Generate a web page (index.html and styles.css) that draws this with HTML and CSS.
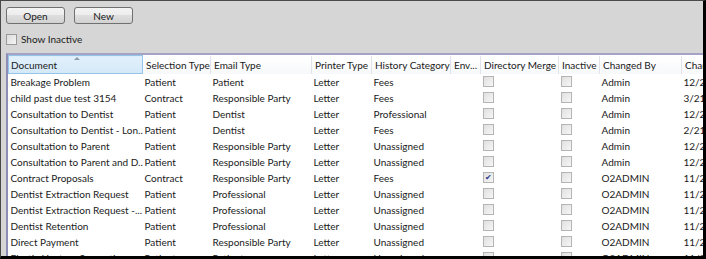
FILE: index.html
```html
<!DOCTYPE html>
<html lang="en">

<head>
    <meta charset="UTF-8" />
    <title>Documents</title>
    <link rel="stylesheet" href="styles.css">
</head>

<body>
    <div class="window">
        <div class="toolbar">
            <button class="btn">Open</button>
            <button class="btn">New</button>
        </div>

        <label class="show-inactive"><span class="box"></span>Show Inactive</label>

        <div class="grid">
            <table>
                <colgroup>
                    <col class="c-doc">
                    <col class="c-sel">
                    <col class="c-email">
                    <col class="c-print">
                    <col class="c-hist">
                    <col class="c-env">
                    <col class="c-dir">
                    <col class="c-inact">
                    <col class="c-by">
                    <col class="c-date">
                </colgroup>
                <thead>
                    <tr>
                        <th class="sorted"><span class="sort-arrow"></span>Document</th>
                        <th>Selection Type</th>
                        <th>Email Type</th>
                        <th>Printer Type</th>
                        <th>History Category</th>
                        <th>Env...</th>
                        <th>Directory Merge</th>
                        <th>Inactive</th>
                        <th>Changed By</th>
                        <th>Changed Date</th>
                    </tr>
                </thead>
                <tbody>
                    <tr><td>Breakage Problem</td><td>Patient</td><td>Patient</td><td>Letter</td><td>Fees</td><td></td><td><span class="cb"></span></td><td><span class="cb"></span></td><td>Admin</td><td>12/28/2011</td></tr>
                    <tr><td>child past due test 3154</td><td>Contract</td><td>Responsible Party</td><td>Letter</td><td>Fees</td><td></td><td><span class="cb"></span></td><td><span class="cb"></span></td><td>Admin</td><td>3/21/2012</td></tr>
                    <tr><td>Consultation to Dentist</td><td>Patient</td><td>Dentist</td><td>Letter</td><td>Professional</td><td></td><td><span class="cb"></span></td><td><span class="cb"></span></td><td>Admin</td><td>12/28/2011</td></tr>
                    <tr><td>Consultation to Dentist - Lon...</td><td>Patient</td><td>Dentist</td><td>Letter</td><td>Fees</td><td></td><td><span class="cb"></span></td><td><span class="cb"></span></td><td>Admin</td><td>2/21/2012</td></tr>
                    <tr><td>Consultation to Parent</td><td>Patient</td><td>Responsible Party</td><td>Letter</td><td>Unassigned</td><td></td><td><span class="cb"></span></td><td><span class="cb"></span></td><td>Admin</td><td>12/28/2011</td></tr>
                    <tr><td>Consultation to Parent and D...</td><td>Patient</td><td>Responsible Party</td><td>Letter</td><td>Unassigned</td><td></td><td><span class="cb"></span></td><td><span class="cb"></span></td><td>Admin</td><td>12/28/2011</td></tr>
                    <tr><td>Contract Proposals</td><td>Contract</td><td>Responsible Party</td><td>Letter</td><td>Fees</td><td></td><td><span class="cb checked">&#10004;</span></td><td><span class="cb"></span></td><td>O2ADMIN</td><td>11/28/2011</td></tr>
                    <tr><td>Dentist Extraction Request</td><td>Patient</td><td>Professional</td><td>Letter</td><td>Unassigned</td><td></td><td><span class="cb"></span></td><td><span class="cb"></span></td><td>O2ADMIN</td><td>11/28/2011</td></tr>
                    <tr><td>Dentist Extraction Request -...</td><td>Patient</td><td>Professional</td><td>Letter</td><td>Unassigned</td><td></td><td><span class="cb"></span></td><td><span class="cb"></span></td><td>O2ADMIN</td><td>11/28/2011</td></tr>
                    <tr><td>Dentist Retention</td><td>Patient</td><td>Professional</td><td>Letter</td><td>Unassigned</td><td></td><td><span class="cb"></span></td><td><span class="cb"></span></td><td>O2ADMIN</td><td>11/28/2011</td></tr>
                    <tr><td>Direct Payment</td><td>Patient</td><td>Responsible Party</td><td>Letter</td><td>Unassigned</td><td></td><td><span class="cb"></span></td><td><span class="cb"></span></td><td>O2ADMIN</td><td>11/28/2011</td></tr>
                    <tr><td>Elastic Ligature Separation</td><td>Patient</td><td>Patient</td><td>Letter</td><td>Unassigned</td><td></td><td><span class="cb"></span></td><td><span class="cb"></span></td><td>O2ADMIN</td><td>11/28/2011</td></tr>
                </tbody>
            </table>
        </div>
    </div>
</body>

</html>
```

FILE: styles.css
```css
body {
    margin: 0;
    font-family: Lato, 'Open Sans', sans-serif;
    font-size: 10px;
    color: #1a1a1a;
}

.window {
    width: 706px;
    height: 259px;
    box-sizing: border-box;
    border-top: 1px solid #4a4a4a;
    border-left: 1px solid #4a4a4a;
    border-right: 3px solid #000;
    border-bottom: 3px solid #000;
    background: #d6d6d6;
    overflow: hidden;
}

/* TOOLBAR */
.toolbar {
    display: flex;
    gap: 9px;
    padding: 6px 0 0 5px;
}

.btn {
    width: 59px;
    height: 17px;
    box-sizing: border-box;
    padding: 0;
    border: 1px solid #707070;
    border-radius: 3px;
    background: linear-gradient(#f4f4f4, #ececec 50%, #dedede 50%, #d2d2d2);
    font-family: inherit;
    font-size: 10px;
    line-height: 14px;
    color: #1a1a1a;
}

.show-inactive {
    display: flex;
    align-items: center;
    gap: 4px;
    margin: 9px 0 0 5px;
    height: 12px;
    line-height: 12px;
}

.box {
    width: 9px;
    height: 9px;
    border: 1px solid #9a9a9a;
    background: linear-gradient(135deg, #dcdcdc, #f4f4f4);
}

/* GRID */
.grid {
    margin: 8px 0 0 5px;
    width: 760px;
    height: 220px;
    background: #fff;
    border-top: 2px solid #a3a3c6;
    border-left: 2px solid #8d8db8;
    overflow: hidden;
}

table {
    border-collapse: collapse;
    table-layout: fixed;
    width: 758px;
}

.c-doc { width: 134px; }
.c-sel { width: 68px; }
.c-email { width: 101px; }
.c-print { width: 60px; }
.c-hist { width: 79px; }
.c-env { width: 30px; }
.c-dir { width: 78px; }
.c-inact { width: 41px; }
.c-by { width: 82px; }
.c-date { width: 85px; }

th {
    position: relative;
    height: 17px;
    padding: 0 0 0 3px;
    font-weight: normal;
    text-align: left;
    white-space: nowrap;
    overflow: hidden;
    background: linear-gradient(#ffffff, #f7f8fa);
    border-right: 1px solid #e2e3ea;
}

th.sorted {
    padding-left: 2px;
    background: linear-gradient(#e3f1fb, #d3e8f8);
    border: 1px solid #96c3e8;
}

.sort-arrow {
    position: absolute;
    top: 1px;
    left: 65px;
    width: 0;
    height: 0;
    border-left: 3px solid transparent;
    border-right: 3px solid transparent;
    border-bottom: 3px solid #8a9bb0;
}

td {
    height: 16px;
    padding: 0 0 0 2px;
    white-space: nowrap;
    overflow: hidden;
    line-height: 16px;
}

.cb {
    display: inline-block;
    vertical-align: middle;
    width: 9px;
    height: 9px;
    margin-top: -3px;
    border: 1px solid #b4b4b4;
    background: linear-gradient(135deg, #e0e0e0, #f6f6f6);
    font-size: 8px;
    line-height: 9px;
    text-align: center;
    color: #2b3a8c;
}
```
